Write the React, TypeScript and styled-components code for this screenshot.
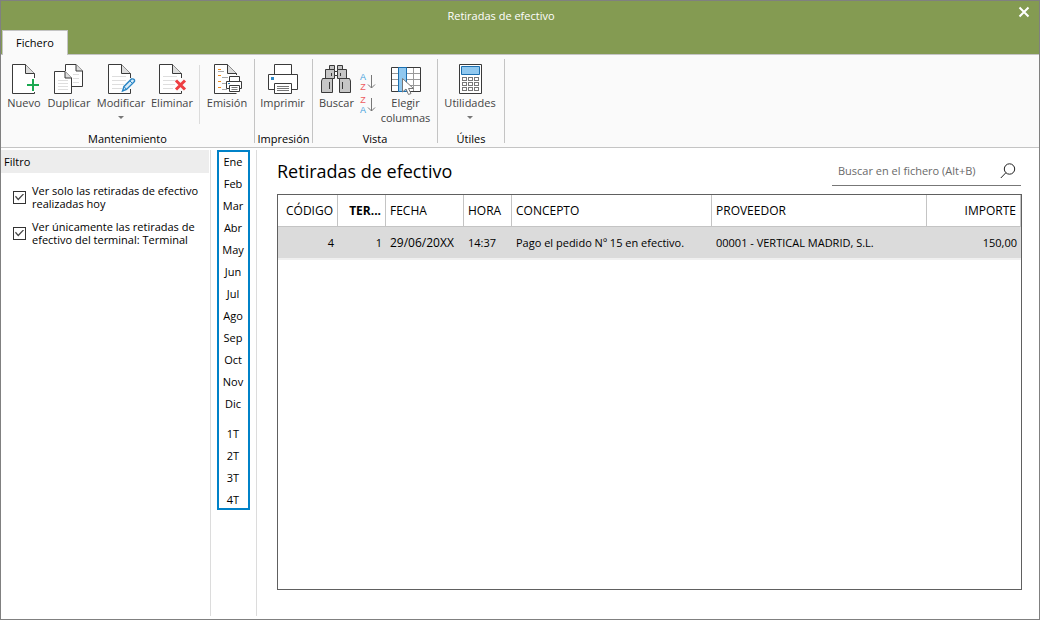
import React from 'react';
import styled, { createGlobalStyle } from 'styled-components';

const GlobalStyle = createGlobalStyle`
  *, *::before, *::after { box-sizing: border-box; }
  body { margin: 0; background: #fff; }
  body, button, input, table {
    font-family: 'Open Sans', 'Noto Sans', sans-serif;
    font-size: 11px;
    color: #000;
  }
  button { padding: 0; border: 0; background: none; cursor: pointer; }
`;

const Window = styled.div`
  display: flex;
  flex-direction: column;
  min-height: 100vh;
  border: 1px solid #808080;
  background: #fff;
`;

const TitleBar = styled.header`
  display: grid;
  grid-template-columns: 40px 1fr 40px;
  height: 29px;
  background: #849b52;
`;

const WindowTitle = styled.div`
  grid-column: 2;
  text-align: center;
  line-height: 30px;
  color: #fff;
  padding-right: 38px;
`;

const CloseButton = styled.button`
  display: flex;
  justify-content: center;
  padding-top: 5px;
  padding-left: 10px;
`;

const TabStrip = styled.nav`
  display: flex;
  height: 25px;
  padding-left: 1px;
  background: #849b52;
  border-bottom: 1px solid #c4c4c4;
`;

const Tab = styled.button`
  height: 25px;
  width: 66px;
  padding-bottom: 2px;
  background: #fafafa;
  border: 1px solid #c4c4c4;
  border-bottom: 0;
`;

const Ribbon = styled.div`
  display: flex;
  height: 93px;
  padding: 4px 0;
  background: #fafafa;
  border-bottom: 1px solid #c4c4c4;
`;

const Group = styled.section<{ $width: number }>`
  display: flex;
  flex-direction: column;
  justify-content: space-between;
  width: ${p => p.$width}px;
  flex: none;
  border-right: 1px solid #c4c4c4;
`;

const GroupTools = styled.div`
  display: flex;
  justify-content: center;
  padding: 5px 2px 0 0;
`;

const GroupName = styled.div`
  text-align: center;
  line-height: 8px;
  white-space: nowrap;
`;

const ToolButton = styled.button<{ $width: number }>`
  display: flex;
  flex-direction: column;
  align-items: center;
  width: ${p => p.$width}px;
  line-height: 15px;
  color: #444;
`;

const ToolLabel = styled.span`
  white-space: nowrap;
`;

const Caret = styled.span`
  margin-top: 6px;
  border: 3px solid transparent;
  border-top-color: #777;
  border-bottom: 0;
`;

const Divider = styled.span`
  width: 1px;
  height: 59px;
  margin: 1px 4px 0;
  background: #dcdcdc;
`;

const SortStack = styled.div`
  display: flex;
  flex-direction: column;
  gap: 3px;
  padding-top: 8px;
`;

const SortButton = styled.button`
  display: flex;
  align-items: center;
  width: 17px;
  height: 20px;
`;

const SortLetters = styled.span`
  display: flex;
  flex-direction: column;
  align-items: center;
  width: 7px;
  font-family: 'Liberation Sans', sans-serif;
  font-size: 9px;
  line-height: 10px;
`;

const Letter = styled.span<{ $color: string }>`
  color: ${p => p.$color};
`;

const Body = styled.div`
  display: flex;
  flex: 1;
  padding: 2px 0 3px;
`;

const FilterPanel = styled.aside`
  width: 210px;
  flex: none;
  padding-right: 1px;
  border-right: 1px solid #dcdcdc;
`;

const FilterTitle = styled.h2`
  margin: 0 0 11px;
  padding-left: 3px;
  font-size: 11px;
  font-weight: 400;
  line-height: 23px;
  background: #ededed;
`;

const CheckRow = styled.label`
  display: flex;
  align-items: center;
  gap: 6px;
  margin-bottom: 10px;
  padding-left: 12px;
  line-height: 13px;
`;

const CheckText = styled.span`
  width: 176px;
`;

const CheckBox = styled.input`
  appearance: none;
  display: grid;
  place-items: center;
  flex: none;
  width: 13px;
  height: 13px;
  margin: 0;
  border: 1px solid #333;
  background: #fff;
  &:checked::after {
    content: '';
    width: 9px;
    height: 7px;
    background: #444;
    clip-path: polygon(0 45%, 10% 33%, 36% 72%, 90% 0, 100% 12%, 36% 100%);
  }
`;

const PeriodColumn = styled.nav`
  width: 46px;
  flex: none;
  padding-left: 6px;
  border-right: 1px solid #dcdcdc;
`;

const PeriodBox = styled.div`
  display: flex;
  flex-direction: column;
  gap: 8px;
  width: 33px;
  box-shadow: inset 0 0 0 2px #0082c8;
`;

const PeriodSet = styled.div`
  display: flex;
  flex-direction: column;
`;

const PeriodButton = styled.button`
  height: 22px;
  padding: 1px 1px 0 0;
  line-height: 20px;
`;

const Content = styled.main`
  display: flex;
  flex-direction: column;
  flex: 1;
  min-width: 0;
  padding: 7px 17px 26px 20px;
`;

const ContentHead = styled.div`
  display: flex;
  justify-content: space-between;
  height: 37px;
`;

const Heading = styled.h1`
  margin: 0;
  font-size: 18px;
  font-weight: 400;
  line-height: 28px;
`;

const Search = styled.div`
  display: flex;
  align-items: center;
  width: 189px;
  height: 29px;
  margin-right: 1px;
  padding: 0 5px 0 6px;
  border-bottom: 1px solid #777;
`;

const SearchInput = styled.input`
  flex: 1;
  min-width: 0;
  padding: 0 0 2px;
  border: 0;
  outline: 0;
  background: none;
  &::placeholder { color: #6a6a6a; opacity: 1; }
`;

const TableFrame = styled.div`
  flex: 1;
  border: 1px solid #606060;
`;

const Table = styled.table`
  width: 100%;
  table-layout: fixed;
  border-collapse: separate;
  border-spacing: 0;
`;

const Col = styled.col<{ $width?: number }>`
  width: ${p => (p.$width ? `${p.$width}px` : 'auto')};
`;

const HeadCell = styled.th<{ $right?: boolean; $bold?: boolean }>`
  height: 32px;
  padding: 0 4px;
  font-size: 12px;
  font-weight: ${p => (p.$bold ? 700 : 400)};
  text-align: ${p => (p.$right ? 'right' : 'left')};
  white-space: nowrap;
  border-right: 1px solid #c4c4c4;
  border-bottom: 1px solid #c4c4c4;
`;

const Cell = styled.td<{ $right?: boolean; $large?: boolean }>`
  height: 33px;
  padding: 0 4px;
  font-size: ${p => (p.$large ? 12 : 11)}px;
  text-align: ${p => (p.$right ? 'right' : 'left')};
  white-space: nowrap;
  background: #dbdbdb;
  border-bottom: 2px solid #f0f0f0;
`;

const Icon = ({ children }: { children: React.ReactNode }) => (
  <svg width="32" height="31" viewBox="0 0 32 31" fill="none" stroke="#3a3a3a" overflow="visible" aria-hidden="true">
    {children}
  </svg>
);

const TextLines = ({ d }: { d: string }) => <path d={d} stroke="#dedede" />;

const docOutline = 'M25.5 14V9.5L16.5 .5H3.5V29.5H19';
const docFold = 'M16.5 .5V9.5H25.5';
const docLines = 'M7 12.5H21M7 16.5H21M7 20.5H19M7 24.5H17';

const NewIcon = () => (
  <Icon>
    <path d="M26.5 14V9.5L17.5 .5H4.5V29.5H26.5V28" fill="#fff" />
    <path d="M17.5 .5V9.5H26.5" fill="#ddd" />
    <path d="M25 15V27M19 21H31" stroke="#1aa850" strokeWidth="2" />
  </Icon>
);

const DuplicateIcon = () => (
  <Icon>
    <path d="M12.5 7V.5H23L29.5 7V22.5H19" fill="#fff" />
    <path d="M23 .5V7H29.5" fill="#ddd" />
    <TextLines d="M20 10.5H26M20 14.5H26M20 18.5H26" />
    <path d="M1.5 7.5H12L18.5 14V29.5H1.5Z" fill="#fff" />
    <path d="M12 7.5V14H18.5" fill="#ddd" />
    <TextLines d="M5 16.5H15M5 19.5H15M5 22.5H15M5 25.5H15" />
  </Icon>
);

const EditIcon = () => (
  <Icon>
    <path d={docOutline} fill="#fff" />
    <path d={docFold} fill="#ddd" />
    <TextLines d={docLines} />
    <path d="M19 29.5H25.5V25" />
    <path d="M17.5 27L19 22.5L26.5 15Q28.5 14.5 29.5 16Q30 17 29 18L21.5 25.5Z" fill="#d8ecf9" stroke="#2b86c5" strokeWidth="1.4" />
    <path d="M25 17L27.5 19.5M19 22.5L21.5 25.5" stroke="#2b86c5" />
  </Icon>
);

const DeleteIcon = () => (
  <Icon>
    <path d={docOutline} fill="#fff" />
    <path d={docFold} fill="#ddd" />
    <TextLines d={docLines} />
    <path d="M19 29.5H25.5V27" />
    <path d="M20 16.5L29 25.5M29 16.5L20 25.5" stroke="#ee3e42" strokeWidth="3" />
  </Icon>
);

const IssueIcon = () => (
  <Icon>
    <path d="M25.5 11V9.5L16.5 .5H3.5V29.5H25.5" fill="#fff" />
    <path d={docFold} fill="#ddd" />
    <path d="M7 5.5H10M7 11.5H10M7 17.5H10M7 23.5H10" stroke="#f08c1e" />
    <path d="M7 7.5H13M11 13.5H17M11 19.5H15M11 25.5H16" stroke="#aaa" />
    <path d="M18.5 17V12.5H28.5V17" fill="#fff" />
    <path d="M15.5 17.5H30.5V24.5H15.5Z" fill="#fff" />
    <path d="M18.5 21.5H28.5V27.5H18.5Z" fill="#fff" />
    <path d="M20.5 23.5H26.5M20.5 25.5H26.5" stroke="#777" />
    <path d="M17 19.5H19" stroke="#2b86c5" />
  </Icon>
);

const PrintIcon = () => (
  <Icon>
    <path d="M7.5 11V.5H24.5V11" fill="#fff" />
    <path d="M1.5 10.5H30.5V25.5H1.5Z" fill="#fff" />
    <path d="M7.5 19.5H24.5V29.5H7.5Z" fill="#fff" />
    <path d="M4 13H7V16H4Z" fill="#2b86c5" stroke="none" />
    <path d="M10 22.5H22M10 24.5H22M10 26.5H22" stroke="#777" />
  </Icon>
);

const BinocularsIcon = () => (
  <Icon>
    <g fill="#c6c6c6">
      <path d="M8.5 1.5H13.5V5.5H8.5ZM16.5 1.5H21.5V5.5H16.5Z" />
      <path d="M4.5 5.5H13.5V14.5H4.5ZM16.5 5.5H25.5V14.5H16.5Z" />
      <path d="M13.5 7.5H16.5V11.5H13.5Z" fill="#fff" />
      <path d="M1.5 14.5H11.5V28.5H.5V17ZM18.5 14.5H28.5L29.5 17V28.5H18.5Z" />
    </g>
    <path d="M8.5 18V25M21.5 18V25M10.5 9V12M19.5 9V12" />
  </Icon>
);

const ColumnsIcon = () => (
  <Icon>
    <path d="M1.5 3.5H30.5V27.5H1.5Z" fill="#fff" />
    <path d="M2 9.5H30M2 15.5H30M2 21.5H30M23.5 4V27" stroke="#999" />
    <path d="M8.5 3.5H16.5V27.5H8.5Z" fill="#90c8ef" stroke="#1b6fb0" />
    <path d="M12.5 14.5V28L16 25L18.5 30.5L21 29.5L18.5 24.5H23.5Z" fill="#fff" stroke="#777" />
  </Icon>
);

const CalculatorIcon = () => (
  <Icon>
    <path d="M5.5 .5H27.5V29.5H5.5Z" fill="#fff" />
    <path d="M7.5 2.5H25.5V10.5H7.5Z" fill="#90c8ef" stroke="#1b6fb0" />
    {[13.5, 18.5, 23.5].map(y =>
      [8.5, 14.5, 20.5].map(x => <rect key={`${x}-${y}`} x={x} y={y} width="4" height="3" stroke="#777" />)
    )}
  </Icon>
);

const Arrow = () => (
  <svg width="9" height="16" viewBox="0 0 9 16" fill="none" stroke="#777" aria-hidden="true">
    <path d="M4.5 1V14M1 10.5L4.5 14L8 10.5" />
  </svg>
);

interface ToolProps {
  icon: React.ReactNode;
  label: React.ReactNode;
  width: number;
  menu?: boolean;
}

const Tool = ({ icon, label, width, menu }: ToolProps) => (
  <ToolButton type="button" $width={width}>
    {icon}
    <ToolLabel>{label}</ToolLabel>
    {menu && <Caret />}
  </ToolButton>
);

const blue = '#3f9fdc';
const red = '#ee5a5e';

const months = ['Ene', 'Feb', 'Mar', 'Abr', 'May', 'Jun', 'Jul', 'Ago', 'Sep', 'Oct', 'Nov', 'Dic'];
const quarters = ['1T', '2T', '3T', '4T'];

const columns = [
  { name: 'CÓDIGO', width: 60, right: true },
  { name: 'TER...', width: 48, right: true, bold: true },
  { name: 'FECHA', width: 78, large: true },
  { name: 'HORA', width: 48 },
  { name: 'CONCEPTO', width: 200 },
  { name: 'PROVEEDOR', width: 215 },
  { name: 'IMPORTE', right: true },
];

const rows = [
  ['4', '1', '29/06/20XX', '14:37', 'Pago el pedido Nº 15 en efectivo.', '00001 - VERTICAL MADRID, S.L.', '150,00'],
];

export default function App() {
  return (
    <Window>
      <GlobalStyle />
      <TitleBar>
        <WindowTitle>Retiradas de efectivo</WindowTitle>
        <CloseButton type="button" aria-label="Cerrar">
          <svg width="12" height="12" viewBox="0 0 12 12" stroke="#fff" strokeWidth="2" aria-hidden="true">
            <path d="M1.5 1.5L10.5 10.5M10.5 1.5L1.5 10.5" />
          </svg>
        </CloseButton>
      </TitleBar>
      <TabStrip>
        <Tab type="button">Fichero</Tab>
      </TabStrip>
      <Ribbon>
        <Group $width={254}>
          <GroupTools>
            <Tool icon={<NewIcon />} label="Nuevo" width={42} />
            <Tool icon={<DuplicateIcon />} label="Duplicar" width={48} />
            <Tool icon={<EditIcon />} label="Modificar" width={56} menu />
            <Tool icon={<DeleteIcon />} label="Eliminar" width={46} />
            <Divider />
            <Tool icon={<IssueIcon />} label="Emisión" width={46} />
          </GroupTools>
          <GroupName>Mantenimiento</GroupName>
        </Group>
        <Group $width={58}>
          <GroupTools>
            <Tool icon={<PrintIcon />} label="Imprimir" width={54} />
          </GroupTools>
          <GroupName>Impresión</GroupName>
        </Group>
        <Group $width={125}>
          <GroupTools>
            <Tool icon={<BinocularsIcon />} label="Buscar" width={46} />
            <SortStack>
              <SortButton type="button" aria-label="Orden ascendente">
                <SortLetters>
                  <Letter $color={blue}>A</Letter>
                  <Letter $color={red}>Z</Letter>
                </SortLetters>
                <Arrow />
              </SortButton>
              <SortButton type="button" aria-label="Orden descendente">
                <SortLetters>
                  <Letter $color={red}>Z</Letter>
                  <Letter $color={blue}>A</Letter>
                </SortLetters>
                <Arrow />
              </SortButton>
            </SortStack>
            <Tool icon={<ColumnsIcon />} label={<>Elegir<br />columnas</>} width={58} />
          </GroupTools>
          <GroupName>Vista</GroupName>
        </Group>
        <Group $width={67}>
          <GroupTools>
            <Tool icon={<CalculatorIcon />} label="Utilidades" width={64} menu />
          </GroupTools>
          <GroupName>Útiles</GroupName>
        </Group>
      </Ribbon>
      <Body>
        <FilterPanel>
          <FilterTitle>Filtro</FilterTitle>
          <CheckRow>
            <CheckBox type="checkbox" defaultChecked />
            <CheckText>Ver solo las retiradas de efectivo<br />realizadas hoy</CheckText>
          </CheckRow>
          <CheckRow>
            <CheckBox type="checkbox" defaultChecked />
            <CheckText>Ver únicamente las retiradas de<br />efectivo del terminal: Terminal</CheckText>
          </CheckRow>
        </FilterPanel>
        <PeriodColumn>
          <PeriodBox>
            <PeriodSet>
              {months.map(m => <PeriodButton type="button" key={m}>{m}</PeriodButton>)}
            </PeriodSet>
            <PeriodSet>
              {quarters.map(q => <PeriodButton type="button" key={q}>{q}</PeriodButton>)}
            </PeriodSet>
          </PeriodBox>
        </PeriodColumn>
        <Content>
          <ContentHead>
            <Heading>Retiradas de efectivo</Heading>
            <Search>
              <SearchInput type="search" aria-label="Buscar en el fichero" placeholder="Buscar en el fichero (Alt+B)" />
              <svg width="16" height="16" viewBox="0 0 16 16" fill="none" stroke="#222" aria-hidden="true">
                <circle cx="9.5" cy="6" r="5.2" />
                <path d="M5.8 9.8L.8 15" />
              </svg>
            </Search>
          </ContentHead>
          <TableFrame>
            <Table>
              <colgroup>
                {columns.map(c => <Col key={c.name} $width={c.width} />)}
              </colgroup>
              <thead>
                <tr>
                  {columns.map(c => (
                    <HeadCell key={c.name} scope="col" $right={c.right} $bold={c.bold}>{c.name}</HeadCell>
                  ))}
                </tr>
              </thead>
              <tbody>
                {rows.map(row => (
                  <tr key={row[0]}>
                    {row.map((value, i) => (
                      <Cell key={columns[i].name} $right={columns[i].right} $large={columns[i].large}>{value}</Cell>
                    ))}
                  </tr>
                ))}
              </tbody>
            </Table>
          </TableFrame>
        </Content>
      </Body>
    </Window>
  );
}
